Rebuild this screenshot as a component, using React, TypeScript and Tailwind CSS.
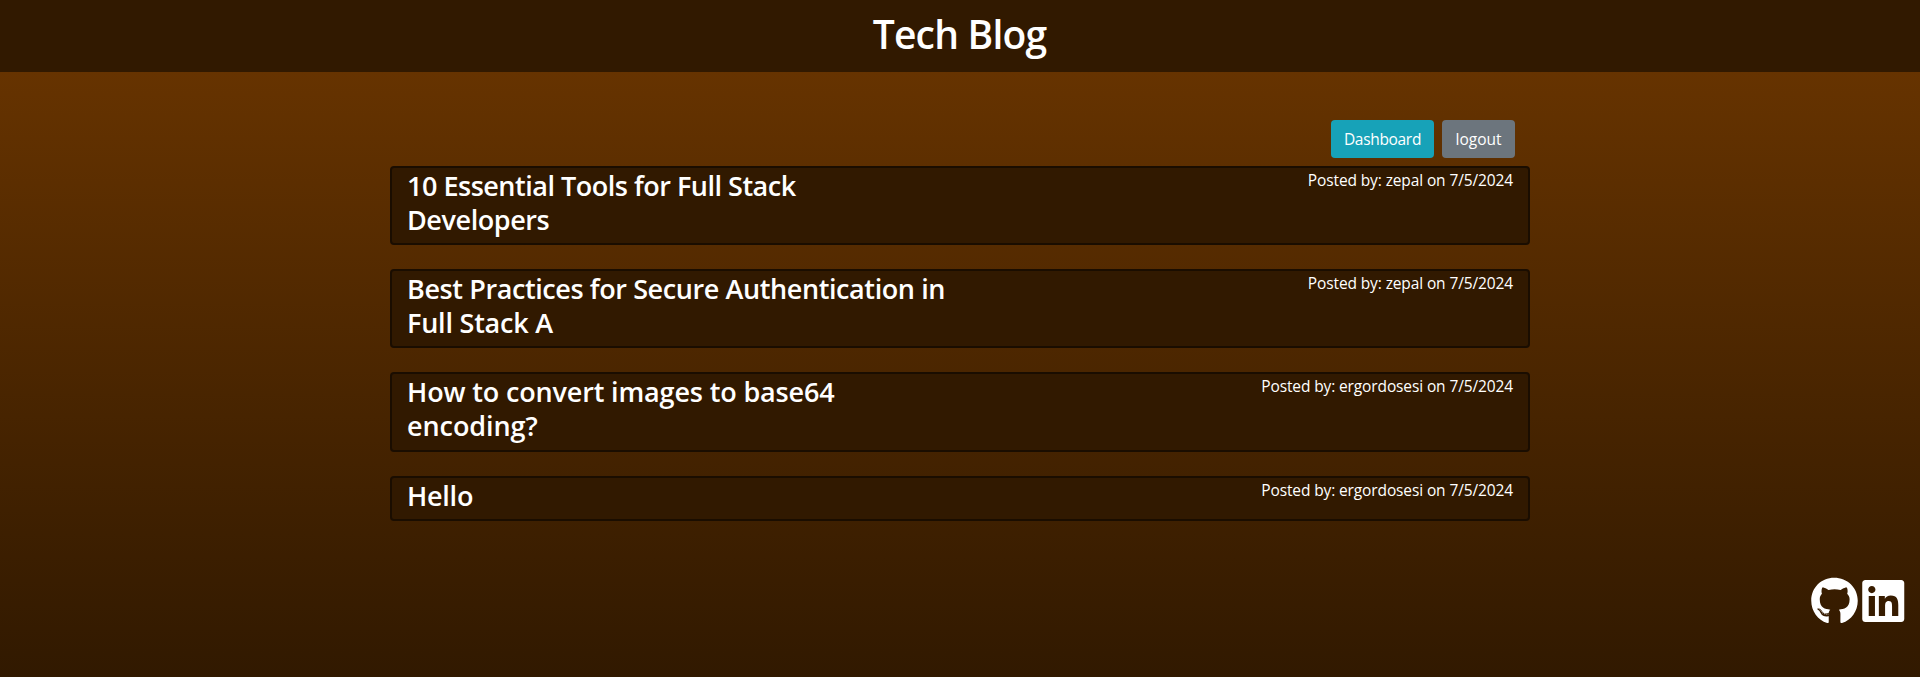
import { FaGithub, FaLinkedin } from "react-icons/fa";

const posts = [
  {
    lines: [
      { text: "10 Essential Tools for Full Stack", cls: "tracking-[-0.49px]" },
      { text: "Developers", cls: "tracking-[-0.42px]" },
    ],
    meta: "Posted by: zepal on 7/5/2024",
  },
  {
    lines: [
      { text: "Best Practices for Secure Authentication in", cls: "tracking-[-0.4px]" },
      { text: "Full Stack A", cls: "tracking-[-0.22px]" },
    ],
    meta: "Posted by: zepal on 7/5/2024",
  },
  {
    lines: [
      { text: "How to convert images to base64", cls: "tracking-[-0.15px]" },
      { text: "encoding?", cls: "tracking-[-0.08px]" },
    ],
    meta: "Posted by: ergordosesi on 7/5/2024",
  },
  {
    lines: [{ text: "Hello", cls: "tracking-[-0.25px]" }],
    meta: "Posted by: ergordosesi on 7/5/2024",
  },
];

export default function App() {
  return (
    <div className="flex h-[677px] flex-col overflow-hidden bg-[#311900] font-['Open_Sans','Noto_Sans',sans-serif] text-base leading-6 text-white">
      <header className="flex h-[72px] shrink-0 items-start justify-center bg-[#311900] pt-[10px]">
        <h1 className="pr-px text-[39px] leading-[48px] font-semibold tracking-[-0.8px]">Tech Blog</h1>
      </header>
      <div className="flex-1 bg-linear-to-b from-[#663300] to-[#311900]">
        <main className="mx-auto w-[1140px] pt-12">
          <nav className="flex justify-end gap-2 pr-[15px]">
            <button className="h-[38px] w-[103px] rounded bg-[#17a2b8] text-center text-[15.5px] tracking-[-0.32px]">
              Dashboard
            </button>
            <button className="h-[38px] w-[73px] rounded bg-[#6c757d] text-center text-[15.5px]">logout</button>
          </nav>
          <div className="mt-2 flex flex-col gap-6">
            {posts.map((post) => (
              <article
                key={post.lines[0].text}
                className="flex items-start justify-between rounded border-2 border-[#1a0d00] bg-[#311900] px-[15px]"
              >
                <h3 className="pt-[1.1px] pb-[6.9px] text-[27px] leading-[33.6px] font-semibold">
                  {post.lines.map((line) => (
                    <span key={line.text} className={`block whitespace-nowrap ${line.cls}`}>
                      {line.text}
                    </span>
                  ))}
                </h3>
                <p className="text-[15.5px] tracking-[-0.12px]">{post.meta}</p>
              </article>
            ))}
          </div>
        </main>
        <footer className="mt-14 flex justify-end gap-1 pr-[15.5px]">
          <FaGithub className="h-12 w-[47px]" />
          <FaLinkedin className="h-12 w-[42.5px]" />
        </footer>
      </div>
    </div>
  );
}
